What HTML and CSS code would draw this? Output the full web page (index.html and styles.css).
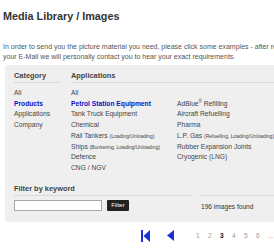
FILE: index.html
```html
<!DOCTYPE html>
<html lang="en">
<head>
  <meta charset="UTF-8">
  <title>Media Library / Images</title>
  <link rel="stylesheet" href="styles.css">
</head>
<body>

<div class="pagina">
  <h1>Media Library / Images</h1>

  <p class="intro">In order to send you the picture material you need, please click some examples - after receiving<br>
    your E-Mail we will personally contact you to hear your exact requirements.</p>

  <div class="painel">
    <div class="filtros">
      <div class="coluna categoria">
        <h2>Category</h2>
        <ul>
          <li><a href="#">All</a></li>
          <li><a href="#" class="ativo">Products</a></li>
          <li><a href="#">Applications</a></li>
          <li><a href="#">Company</a></li>
        </ul>
      </div>

      <div class="coluna aplicacoes">
        <h2>Applications</h2>
        <div class="listas">
          <ul>
            <li><a href="#">All</a></li>
            <li><a href="#" class="ativo">Petrol Station Equipment</a></li>
            <li><a href="#">Tank Truck Equipment</a></li>
            <li><a href="#">Chemical</a></li>
            <li><a href="#">Rail Tankers <small>(Loading/Unloading)</small></a></li>
            <li><a href="#">Ships <small>(Bunkering, Loading/Unloading)</small></a></li>
            <li><a href="#">Defence</a></li>
            <li><a href="#">CNG / NGV</a></li>
          </ul>
          <ul>
            <li>&nbsp;</li>
            <li><a href="#">AdBlue<sup>®</sup> Refilling</a></li>
            <li><a href="#">Aircraft Refuelling</a></li>
            <li><a href="#">Pharma</a></li>
            <li><a href="#">L.P. Gas <small>(Refuelling, Loading/Unloading)</small></a></li>
            <li><a href="#">Rubber Expansion Joints</a></li>
            <li><a href="#">Cryogenic (LNG)</a></li>
          </ul>
        </div>
      </div>
    </div>

    <div class="busca">
      <div class="coluna palavra">
        <h2>Filter by keyword</h2>
        <form class="form-busca">
          <input type="text" class="campo">
          <button type="button" class="botao">Filter</button>
        </form>
      </div>
      <div class="coluna resultado">
        <h2>&nbsp;</h2>
        <div class="total">196 images found</div>
      </div>
    </div>
  </div>

  <div class="paginacao">
    <a href="#" class="seta">
      <svg width="9" height="12" viewBox="0 0 9 12"><rect x="0" y="0" width="2" height="12" fill="#1b2fd2"/><polygon points="9,0 2.5,6 9,12" fill="#1b2fd2"/></svg>
    </a>
    <a href="#" class="seta">
      <svg width="7" height="11" viewBox="0 0 7 11"><polygon points="7,0 0,5.5 7,11" fill="#1b2fd2"/></svg>
    </a>
    <div class="numeros">
      <a href="#">1</a>
      <a href="#">2</a>
      <a href="#" class="atual">3</a>
      <a href="#">4</a>
      <a href="#">5</a>
      <a href="#">6</a>
      <a href="#">...</a>
    </div>
  </div>
</div>

</body>
</html>
```

FILE: styles.css
```css
html {
  font-family: "Liberation Sans", Arial, sans-serif;
  color: #444;
}

body {
  margin: 0;
  overflow: hidden;
}

.pagina {
  width: 340px;
  padding-left: 3px;
}

h1 {
  font-size: 10.8px;
  line-height: 16px;
  margin: 8px 0 0;
  color: #333;
}

.intro {
  font-size: 7px;
  line-height: 10px;
  margin: 18px 0 0;
  white-space: nowrap;
  color: #555;
}

.painel {
  margin: 3px 0 0 2px;
  padding: 6px 0 10px 9px;
  background: #efefef;
  border-radius: 3px 0 0 3px;
}

h2 {
  font-size: 7.4px;
  line-height: 10px;
  margin: 0;
  padding-bottom: 1px;
  border-bottom: 1px solid #d8d8d8;
  color: #444;
}

ul {
  list-style: none;
  padding: 0;
  margin: 0;
}

li {
  font-size: 6.7px;
  line-height: 10.7px;
  white-space: nowrap;
}

a {
  text-decoration: none;
  color: #444;
}

a.ativo {
  color: #1010c8;
  font-weight: bold;
}

small {
  font-size: 5px;
}

sup {
  font-size: 4.5px;
  line-height: 0;
}

.filtros {
  display: flex;
  gap: 11px;
}

.categoria {
  width: 46px;
}

.aplicacoes {
  flex: 1;
}

.filtros ul {
  margin-top: 5px;
}

.listas {
  display: flex;
}

.listas ul:first-child {
  width: 106px;
}

.busca {
  display: flex;
  gap: 10px;
  margin-top: 10px;
}

.palavra {
  width: 177px;
}

.resultado {
  flex: 1;
}

.form-busca {
  display: flex;
  gap: 5px;
  margin-top: 4px;
}

.campo {
  width: 88px;
  height: 11px;
  box-sizing: border-box;
  margin: 0;
  padding: 0;
  border: 1px solid #a8a8a8;
  background: #fff;
}

.botao {
  height: 11px;
  width: 22px;
  margin: 0;
  padding: 0;
  border: 0;
  border-radius: 1px;
  background: #222;
  color: #fff;
  font-family: "Liberation Sans", Arial, sans-serif;
  font-size: 6px;
  line-height: 11px;
}

.total {
  font-size: 6.6px;
  line-height: 10px;
  margin-top: 6px;
  color: #333;
}

.paginacao {
  display: flex;
  align-items: center;
  margin: 8px 0 0 138px;
}

.seta {
  display: flex;
  margin-right: 17px;
}

.numeros {
  display: flex;
  gap: 7px;
  margin-left: 5px;
}

.numeros a {
  font-size: 6.5px;
  color: #999;
  width: 5px;
}

.numeros a.atual {
  color: #111;
  font-weight: bold;
}
```
